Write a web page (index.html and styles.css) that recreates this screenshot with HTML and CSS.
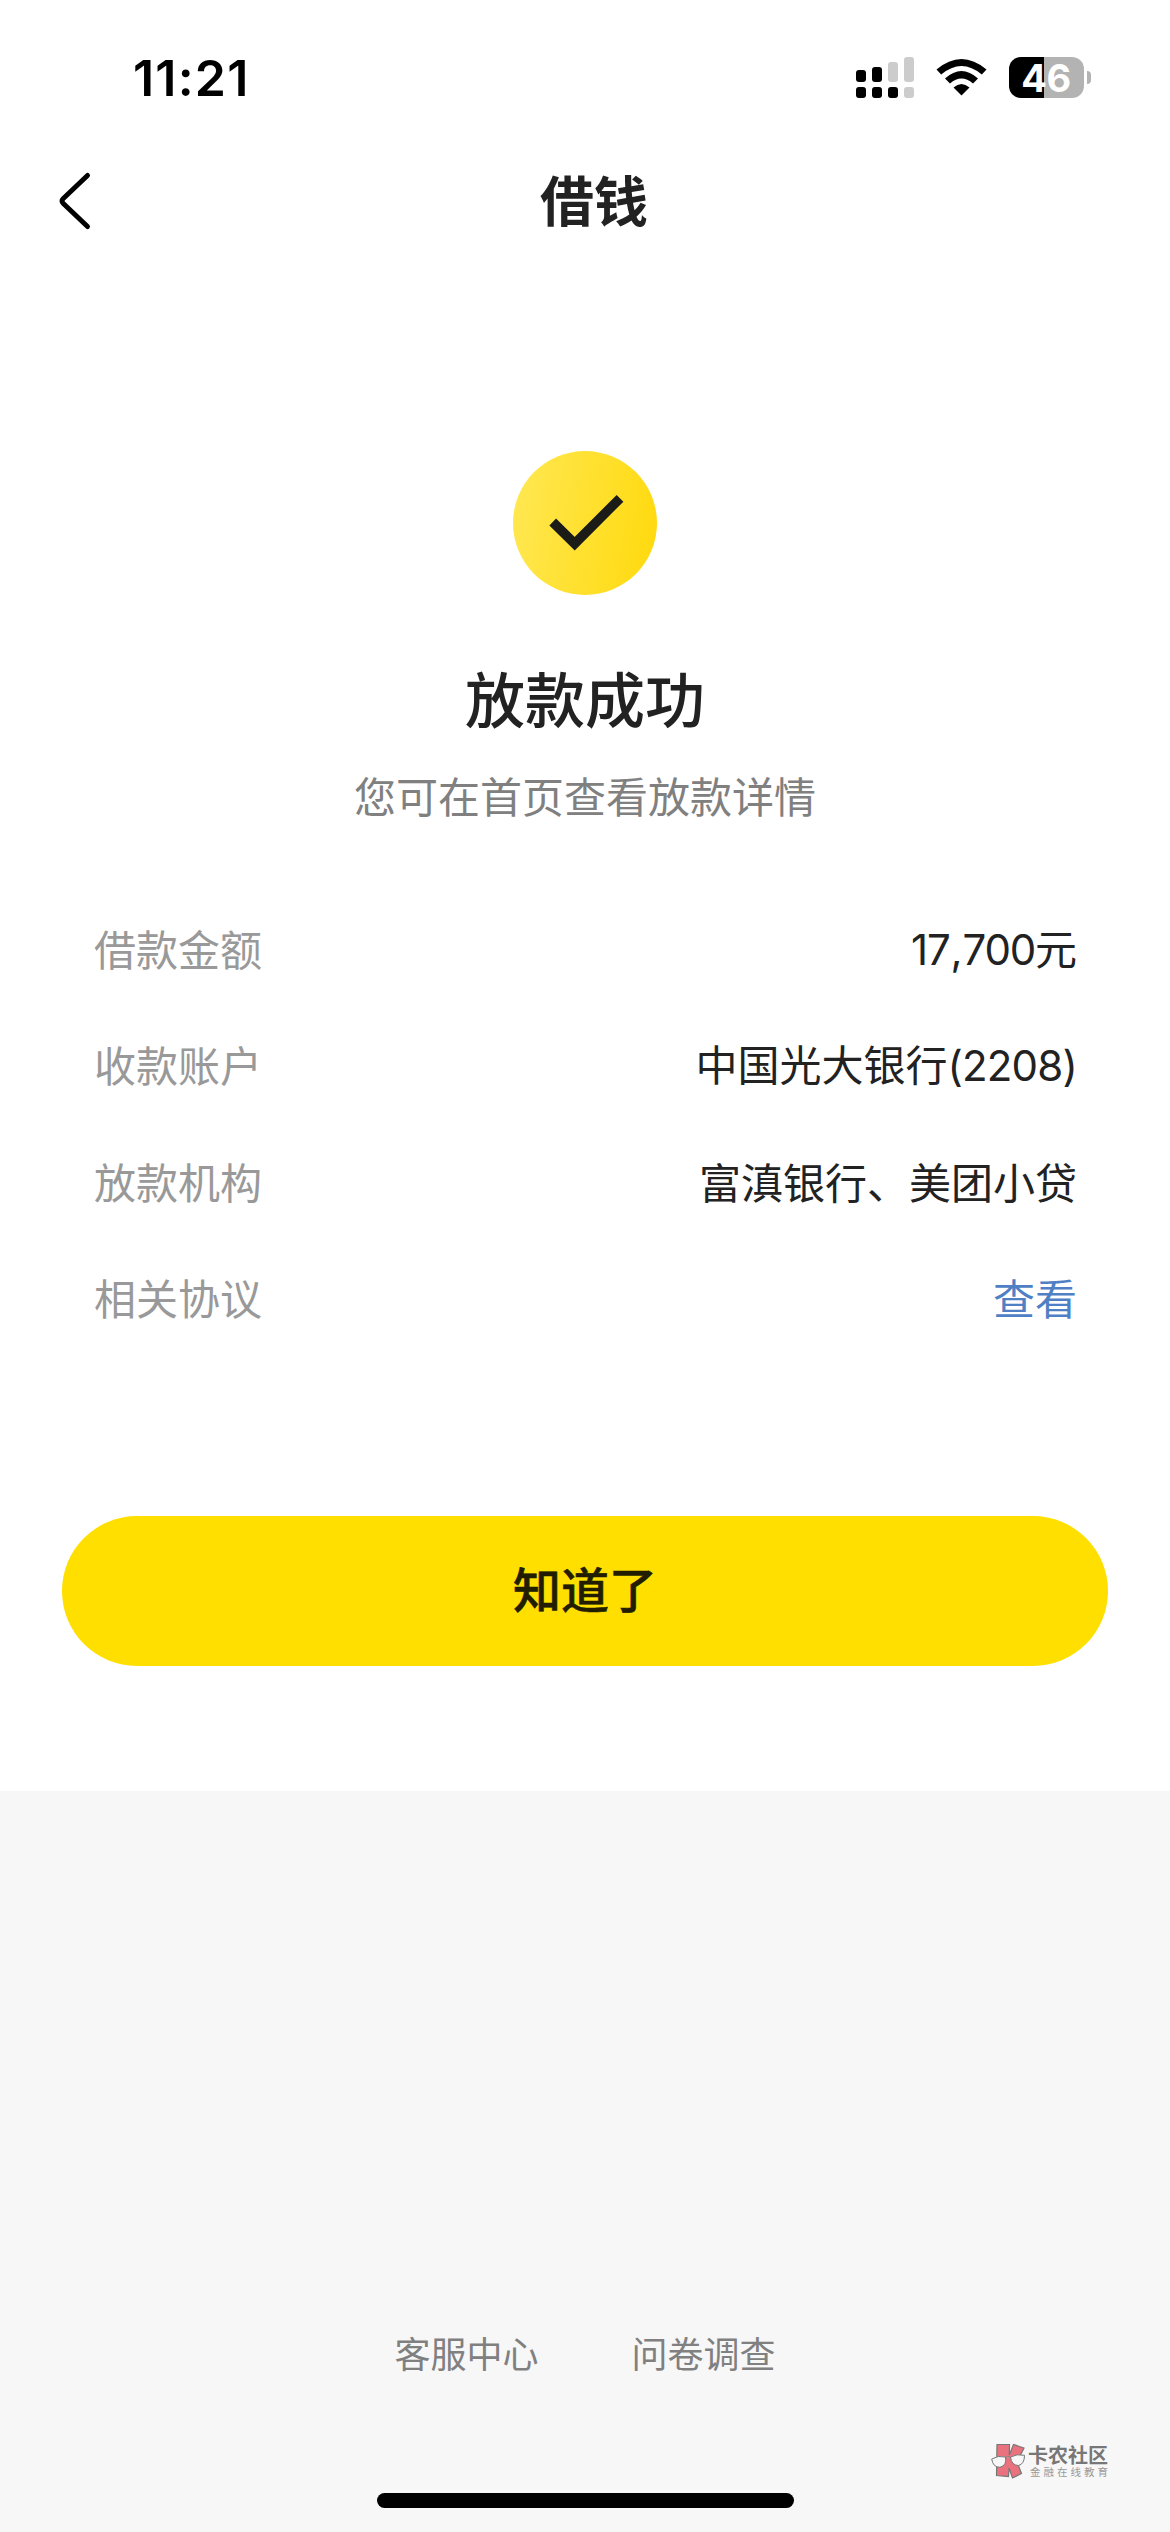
FILE: index.html
```html
<!DOCTYPE html>
<html lang="zh-CN">
<head>
<meta charset="utf-8">
<title>借钱</title>
<link rel="stylesheet" href="styles.css">
</head>
<body>
<main class="screen">
  <section class="panel">
    <header class="status">
      <span class="time">11:21</span>
      <div class="indicators">
        <svg class="signal" width="58" height="41" viewBox="0 0 58 41">
          <rect x="0" y="13" width="10" height="12" rx="3"/><rect x="16" y="10" width="10" height="15" rx="3"/>
          <rect class="dim" x="32" y="5" width="10" height="20" rx="3"/><rect class="dim" x="48" y="0" width="10" height="25" rx="3"/>
          <rect x="0" y="30" width="10" height="11" rx="3"/><rect x="16" y="30" width="10" height="11" rx="3"/>
          <rect x="32" y="30" width="10" height="11" rx="3"/><rect class="dim" x="48" y="30" width="10" height="11" rx="3"/>
        </svg>
        <svg class="wifi" width="51" height="38" viewBox="0 0 51 38">
          <path d="M0.500 11.500Q25.500-9.500 50.500 11.500L45.800 16.500Q25.500-0.500 5.200 16.500Z"/>
          <path d="M9 20.500Q25.500 5.500 42 20.500L37 25.500Q25.500 15.500 14 25.500Z"/>
          <path d="M17.500 29.500Q25.500 22.500 33.500 29.500L25.500 37.500Z"/>
        </svg>
        <div class="battery"><span class="level">46</span><i class="nub"></i></div>
      </div>
    </header>
    <nav class="nav">
      <svg class="back" width="34" height="60" viewBox="0 0 34 60"><path d="M29.500 4.500L5.300 27.500Q2.700 30 5.300 32.500L29.500 55.500"/></svg>
      <h1 class="nav-title">借钱</h1>
    </nav>
    <svg class="success" width="144" height="144" viewBox="0 0 144 144">
      <defs><linearGradient id="gold" x1="0" y1="0.42" x2="1" y2="0.58"><stop offset="0" stop-color="#ffe750"/><stop offset="1" stop-color="#ffda10"/></linearGradient></defs>
      <circle cx="72" cy="72" r="72" fill="url(#gold)"/>
      <path d="M39.700 71L61.700 92.700L107 47.300" fill="none" stroke="#1b1b18" stroke-width="9.500"/>
    </svg>
    <h2 class="title">放款成功</h2>
    <p class="subtitle">您可在首页查看放款详情</p>
    <dl class="details">
      <div class="row"><dt>借款金额</dt><dd><span class="num amount">17<span class="comma">,</span>700</span>元</dd></div>
      <div class="row"><dt>收款账户</dt><dd>中国光大银行<span class="num">(2208)</span></dd></div>
      <div class="row"><dt>放款机构</dt><dd>富滇银行、美团小贷</dd></div>
      <div class="row"><dt>相关协议</dt><dd class="link">查看</dd></div>
    </dl>
    <button class="confirm">知道了</button>
  </section>
  <footer class="footer">
    <div class="links"><span>客服中心</span><span>问卷调查</span></div>
    <div class="brand">
      <svg width="36" height="38" viewBox="0 0 36 38">
        <path class="k" d="M6 1.500H18.500L18.300 12L22.500 1.500L33 5L26 19L30.500 30.500L21.500 35L18 25L17.500 33.500L5.500 32.500Z"/>
        <path class="lens" d="M0.700 16Q7 12 14.500 14Q16 22.500 9 24.300Q2 24.500 0.700 16Z"/>
        <path class="lens" d="M19.500 14Q26 10.500 33.500 12.300Q33.500 21 27.500 22.500Q20.500 22.500 19.500 14Z"/>
        <path class="lens" d="M14.500 14.500Q17 13 19.500 14"/>
      </svg>
      <div class="brand-text"><span class="brand-name">卡农社区</span><span class="brand-sub">金融在线教育</span></div>
    </div>
    <div class="home-bar"></div>
  </footer>
</main>
</body>
</html>
```
FILE: styles.css
```css
* { box-sizing: border-box; margin: 0; padding: 0; }
body { background: #f7f7f7; font-family: "Noto Sans CJK SC", sans-serif; color: #222; }
.screen { width: 1170px; height: 2532px; display: flex; flex-direction: column; }
.panel { height: 1791px; background: #fff; display: flex; flex-direction: column; align-items: center; }
.status { width: 100%; height: 150px; padding: 48px 79px 0 133px; display: flex; justify-content: space-between; align-items: flex-start; color: #000; }
.time { font: 600 50px/60px Inter, sans-serif; letter-spacing: 1.2px; }
.indicators { display: flex; align-items: flex-start; padding-top: 9px; }
.signal { margin-right: 22px; }
.dim { fill: #ccc; }
.wifi { margin: 1px 22px 0 0; }
.battery { display: flex; align-items: center; gap: 3px; }
.level { width: 75px; height: 41px; border-radius: 12px; background: linear-gradient(90deg, #000 35px, #b3b3b3 35px); color: #fff; font: 700 38px/42px Inter, sans-serif; letter-spacing: -0.5px; padding-right: 1px; text-align: center; }
.nub { width: 4px; height: 13px; border-radius: 0 4px 4px 0; background: #b3b3b3; }
.nav { width: 100%; height: 102px; padding-left: 58px; display: grid; grid-template-columns: 34px 1fr; align-items: center; }
.back { fill: none; stroke: #000; stroke-width: 5; stroke-linecap: round; }
.nav-title { font-size: 54px; line-height: 80px; font-weight: 700; text-align: center; padding: 0 74px 4px 0; }
.success { margin-top: 199px; flex: none; }
.title { margin-top: 57px; font-size: 60px; line-height: 90px; font-weight: 500; }
.subtitle { margin-top: 22px; font-size: 42px; line-height: 62px; color: #808080; }
.details { width: 100%; margin-top: 64px; padding: 0 93px 0 94px; }
.row { height: 116.3px; display: flex; justify-content: space-between; align-items: center; font-size: 42px; line-height: 62px; }
.row dt { color: #999; }
.num { font-family: Inter, sans-serif; letter-spacing: -0.8px; }
.num.amount { letter-spacing: -1.2px; }
.comma { margin: 0 1px 0 1px; }
.row .link { color: #4f7fc4; }
.confirm { width: 1046px; height: 150px; margin-top: 161px; padding-bottom: 8px; border: 0; border-radius: 75px; background: #fedf00; color: #221d00; font: 500 48px/72px "Noto Sans CJK SC", sans-serif; -webkit-text-stroke: 0.6px #221d00; flex: none; }
.footer { flex: 1; display: flex; flex-direction: column; align-items: center; }
.links { margin-top: 534px; display: flex; gap: 93px; font-size: 36px; line-height: 54px; color: #808080; }
.brand { align-self: flex-end; margin: 64px 62px 0 0; display: flex; gap: 1px; }
.brand .k { fill: #e9727e; stroke: #777; stroke-width: 1.2; }
.brand .lens { fill: #f7f7f7; stroke: #777; stroke-width: 1; }
.brand-text { display: flex; flex-direction: column; padding-top: 1px; }
.brand-name { font-size: 20px; line-height: 22px; font-weight: 700; color: #777; }
.brand-sub { font-size: 10.5px; line-height: 12px; letter-spacing: 3px; color: #999; margin: 0 -3px 0 2px; }
.home-bar { width: 417px; height: 15px; margin-top: 12px; border-radius: 8px; background: #000; }
```
